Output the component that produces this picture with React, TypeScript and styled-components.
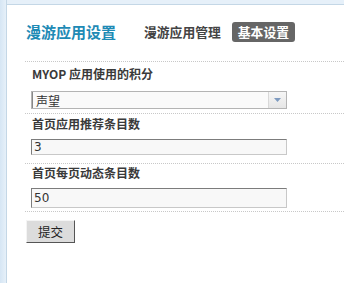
import React from "react";
import styled, { createGlobalStyle } from "styled-components";

const Global = createGlobalStyle`
  html, body { margin: 0; padding: 0; overflow: hidden; background: #fff; }
  body { font-family: "Noto Sans CJK SC", "Noto Sans", sans-serif; font-size: 12px; color: #333; }
`;

const Page = styled.div`
  display: flex;
  width: 344px;
  height: 283px;
  background: #fff;
`;

const LeftRail = styled.div`
  width: 6px;
  flex: none;
  background: linear-gradient(to right, #d6e6f4, #e6f0f9);
  border-right: 1px solid #c4d7e6;
`;

const Main = styled.div`
  flex: 1;
  display: flex;
  flex-direction: column;
  min-width: 0;
`;

const TopBar = styled.div`
  height: 4px;
  background: #e6f0f9;
  border-bottom: 1px solid #c4d7e6;
`;

const Content = styled.div`
  padding-left: 18px;
  display: flex;
  flex-direction: column;
`;

const Header = styled.div`
  display: flex;
  align-items: center;
  padding: 17px 0 19px 1px;
  height: 20px;
  border-bottom: 1px dotted #c8c8c8;
`;

const Title = styled.h1`
  margin: 0;
  font-size: 15px;
  font-weight: 700;
  color: #1e8ab5;
  line-height: 20px;
`;

const Tabs = styled.div`
  display: flex;
  align-items: center;
  margin-left: 28px;
  gap: 11px;
`;

const Tab = styled.span<{ $active?: boolean }>`
  font-size: 12.8px;
  font-weight: 700;
  line-height: 20px;
  height: 20px;
  padding: ${(p) => (p.$active ? "0 6px" : "0")};
  border-radius: 3px;
  color: ${(p) => (p.$active ? "#fff" : "#444")};
  background: ${(p) => (p.$active ? "#666" : "transparent")};
`;

const Row = styled.div<{ $pt: number; $gap: number; $pb: number }>`
  display: flex;
  flex-direction: column;
  padding: ${(p) => `${p.$pt}px 0 ${p.$pb}px`};
  gap: ${(p) => p.$gap}px;
  border-bottom: 1px dotted #c8c8c8;
`;

const Label = styled.div`
  padding-left: 7px;
  font-size: 12px;
  font-weight: 700;
  line-height: 16px;
  color: #3a3a3a;
`;

const Line = styled.div`
  display: flex;
  align-items: center;
  margin-left: 6px;
`;

const Field = styled.div<{ $h: number }>`
  box-sizing: border-box;
  width: 256px;
  height: ${(p) => p.$h}px;
  border: 1px solid #c8c8c8;
  border-top-color: #7c7c7c;
  border-left-color: #7c7c7c;
  background: #f8f8f8;
  font-family: "DejaVu Sans", "Noto Sans CJK SC", sans-serif;
  font-size: 12px;
  color: #333;
  padding-left: 2px;
  display: flex;
  align-items: center;
  line-height: 1;
`;

const SelectBox = styled.div`
  box-sizing: border-box;
  width: 256px;
  height: 18px;
  border: 1px solid #b4b4b4;
  background: #fafafa;
  display: flex;
  align-items: stretch;
`;

const SelectText = styled.div`
  flex: 1;
  display: flex;
  align-items: center;
  padding-left: 3px;
  font-size: 12px;
  color: #333;
  border-left: 1px solid #888;
`;

const Arrow = styled.div`
  width: 17px;
  border-left: 1px solid #d8d8d8;
  background: linear-gradient(#f6f6f6, #e6e6e6);
  display: flex;
  align-items: center;
  justify-content: center;
`;

const Submit = styled.button`
  box-sizing: border-box;
  margin: 8px 0 0 1px;
  width: 49px;
  height: 23px;
  padding: 0;
  font-family: "Noto Sans CJK SC", sans-serif;
  font-size: 12.5px;
  color: #222;
  background: #dcdcdc;
  border: 1px solid #f4f4f4;
  border-right-color: #555;
  border-bottom-color: #555;
  align-self: flex-start;
`;

export default function App() {
  return (
    <>
      <Global />
      <Page>
        <LeftRail />
        <Main>
          <TopBar />
          <Content>
            <Header>
              <Title>漫游应用设置</Title>
              <Tabs>
                <Tab>漫游应用管理</Tab>
                <Tab $active>基本设置</Tab>
              </Tabs>
            </Header>
            <Row $pt={4} $gap={9} $pb={4}>
              <Label>MYOP 应用使用的积分</Label>
              <Line>
                <SelectBox>
                  <SelectText>声望</SelectText>
                  <Arrow>
                    <svg width="7" height="4" viewBox="0 0 7 4">
                      <path d="M0 0h7L3.5 4z" fill="#7e9bc0" />
                    </svg>
                  </Arrow>
                </SelectBox>
              </Line>
            </Row>
            <Row $pt={2} $gap={7} $pb={8}>
              <Label>首页应用推荐条目数</Label>
              <Line>
                <Field $h={16}>3</Field>
              </Line>
            </Row>
            <Row $pt={1} $gap={7} $pb={3}>
              <Label>首页每页动态条目数</Label>
              <Line>
                <Field $h={20}>50</Field>
              </Line>
            </Row>
            <Submit>提交</Submit>
          </Content>
        </Main>
      </Page>
    </>
  );
}
